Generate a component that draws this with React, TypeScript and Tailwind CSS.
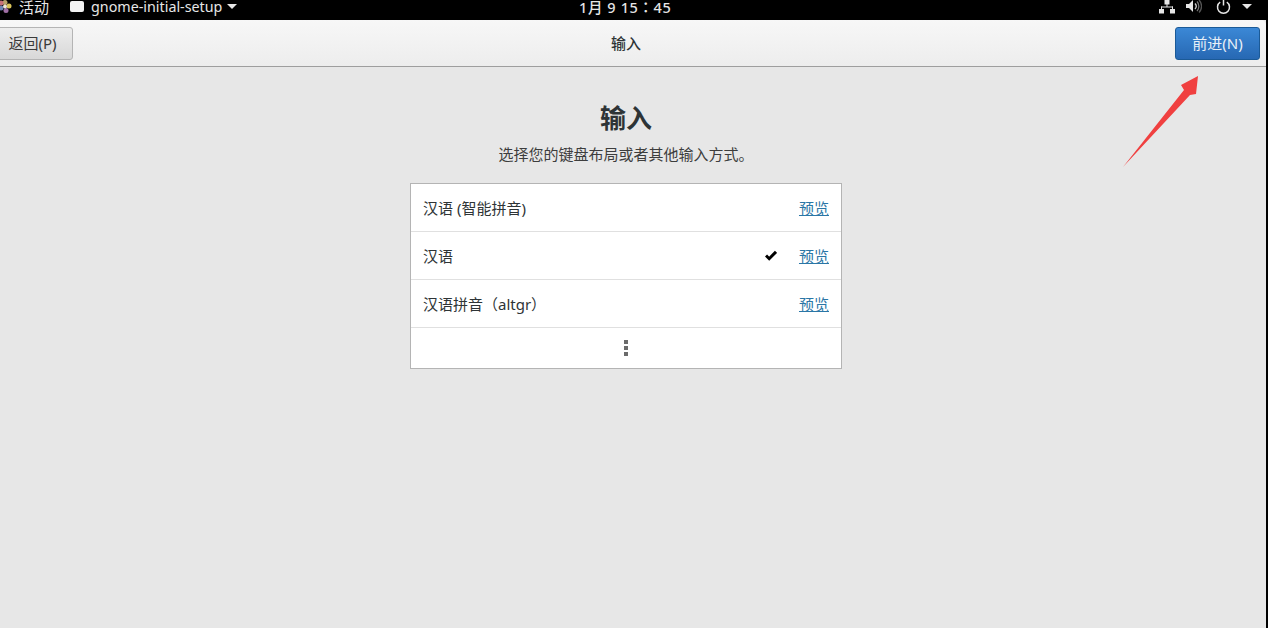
import React from 'react';

const rows = [
  { label: '汉语 (智能拼音)', checked: false },
  { label: '汉语', checked: true },
  { label: '汉语拼音（altgr）', checked: false },
];

const TopBar: React.FC = () => (
  <div className="relative flex h-5 shrink-0 items-start bg-black text-[#e6e6e6]">
    <svg width="13" height="14" viewBox="0 0 13 14" className="ml-[-1px] shrink-0">
      <circle cx="6" cy="2.5" r="2.5" fill="#b9a26a" />
      <circle cx="10" cy="6" r="2.5" fill="#d9c35a" />
      <circle cx="7" cy="10.5" r="2.5" fill="#9f6fa5" />
      <circle cx="2" cy="8" r="2.5" fill="#6f86b5" />
      <circle cx="2" cy="3" r="2.5" fill="#c9707a" />
      <circle cx="6" cy="6.5" r="2" fill="#f0e8d8" />
    </svg>
    <span className="ml-[7px] text-[15px] leading-[15px]">活动</span>
    <div className="ml-[21px] mt-[1px] h-[11px] w-[14px] rounded-[2px] bg-[#f2f2f2]" />
    <span className="ml-[7px] text-[14.3px] leading-[13px]">gnome-initial-setup</span>
    <div className="ml-[5px] mt-[4px] h-0 w-0 border-x-[5px] border-t-[5px] border-x-transparent border-t-[#e6e6e6]" />
    <span className="absolute left-[579px] top-0 font-['Noto_Sans','Noto_Sans_CJK_TC',sans-serif] text-[14.5px] font-medium leading-[14px] tracking-[0.6px]">1月 9  15：45</span>
    <div className="ml-auto mr-[16px] flex items-start">
      <svg width="16" height="14" viewBox="0 0 16 14" fill="#e6e6e6">
        <rect x="5.5" y="0" width="5" height="4.5" />
        <rect x="7.5" y="4" width="1" height="3" />
        <rect x="2" y="6.5" width="12" height="1" />
        <rect x="2" y="6.5" width="1" height="3" />
        <rect x="13" y="6.5" width="1" height="3" />
        <rect x="0" y="9" width="5" height="4.5" />
        <rect x="11" y="9" width="5" height="4.5" />
      </svg>
      <svg width="16" height="13" viewBox="0 0 16 13" className="ml-[11px]" fill="none">
        <path d="M0 4h3l4-4v12L3 8H0z" fill="#e6e6e6" />
        <path d="M9 3.5a4 4 0 0 1 0 5.5" stroke="#cfcfcf" strokeWidth="1.3" />
        <path d="M11 1.5a7 7 0 0 1 0 9.5" stroke="#777777" strokeWidth="1.3" />
        <path d="M13 0a9 9 0 0 1 0 12.5" stroke="#555555" strokeWidth="1.3" />
      </svg>
      <svg width="15" height="14" viewBox="0 0 15 14" className="ml-[14px]" fill="none" stroke="#e6e6e6" strokeWidth="1.5">
        <path d="M4.2 2.2a6 6 0 1 0 6.6 0" />
        <path d="M7.5 -1v6.5" />
      </svg>
      <div className="ml-[11px] mt-[4px] h-0 w-0 border-x-[5px] border-t-[5px] border-x-transparent border-t-[#e6e6e6]" />
    </div>
  </div>
);

const HeaderBar: React.FC = () => (
  <div className="relative flex h-[47px] shrink-0 items-center justify-between rounded-t-[5px] border-b border-[#9e9e9e] bg-gradient-to-b from-[#f7f7f7] to-[#ededed]">
    <button className="ml-[6px] flex h-[33px] w-[81px] items-center justify-center rounded-[3px] border border-[#b4b4b4] bg-gradient-to-b from-[#ededed] to-[#d8d8d8] text-[15px] text-[#3a3a3a]">
      返回(P)
    </button>
    <span className="absolute left-0 right-0 text-center text-[15px] font-medium text-[#2e3436]">输入</span>
    <button className="relative mr-[6px] flex h-[33px] w-[85px] items-center justify-center rounded-[3px] border border-[#1b5a97] bg-gradient-to-b from-[#3b88d6] to-[#2768b3] text-[15px] text-[#e8f0f8]">
      前进(N)
    </button>
  </div>
);

const App: React.FC = () => {
  return (
    <div className="relative flex h-[628px] w-[1268px] flex-col overflow-hidden bg-black font-['Noto_Sans','Noto_Sans_CJK_SC',sans-serif]">
      <TopBar />
      {/* the window sticks out past the left edge of the screen */}
      <div className="ml-[-14px] mr-[2px] flex flex-1 flex-col bg-[#e7e7e7]">
        <HeaderBar />
        <div className="flex flex-col items-center">
          <h1 className="mt-[31px] text-[26px] font-bold leading-[40px] text-[#2e3436]">输入</h1>
          <p className="mt-[5px] text-[15px] leading-[22px] text-[#3d3d3d]">选择您的键盘布局或者其他输入方式。</p>
          <div className="mt-[18px] w-[432px] border border-[#b4b4b4] bg-white">
            {rows.map((row) => (
              <div key={row.label} className="flex h-[48px] items-center border-b border-[#e0e0e0] pl-3 pr-3 pt-[2px] text-[15px] text-[#2e3436]">
                <span>{row.label}</span>
                {row.checked && (
                  <svg width="12" height="11" viewBox="0 0 12 11" className="ml-auto mt-[-2px]" fill="none" stroke="#000000" strokeWidth="3">
                    <path d="M1 5.5l3.2 3.2L11 1.8" />
                  </svg>
                )}
                <a className={`${row.checked ? 'ml-[22px]' : 'ml-auto'} text-[#2a76a6] underline`}>预览</a>
              </div>
            ))}
            <div className="flex h-[40px] flex-col items-center justify-center gap-[2px]">
              <div className="h-[4px] w-[4px] bg-[#6b6b6b]" />
              <div className="h-[4px] w-[4px] bg-[#6b6b6b]" />
              <div className="h-[4px] w-[4px] bg-[#6b6b6b]" />
            </div>
          </div>
        </div>
      </div>
      {/* red annotation arrow drawn over the screenshot */}
      <svg className="absolute left-[1110px] top-[60px]" width="100" height="120" viewBox="1110 60 100 120">
        <polygon points="1123,167 1184,90 1181,85 1198,76 1196,94 1190,95" fill="#f04040" />
      </svg>
    </div>
  );
};

export default App;
